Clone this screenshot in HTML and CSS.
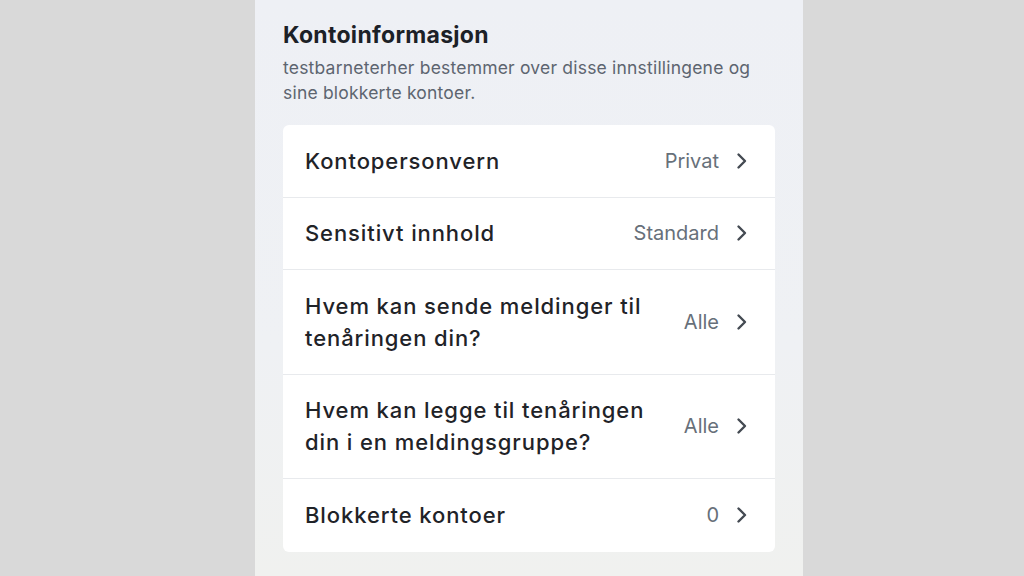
FILE: index.html
```html
<!DOCTYPE html>
<html lang="no">
<head>
<meta charset="utf-8">
<link rel="stylesheet" href="styles.css">
</head>
<body>
<div class="panel">
  <h1 class="title">Kontoinformasjon</h1>
  <p class="subtitle">testbarneterher bestemmer over disse innstillingene og sine blokkerte kontoer.</p>
  <div class="card">
    <div class="row r1">
      <span class="label">Kontopersonvern</span>
      <span class="value">Privat</span>
      <svg class="chev" viewBox="0 0 12 18"><path d="M2.5 2.5 L9 9 L2.5 15.5"/></svg>
    </div>
    <div class="row r1">
      <span class="label">Sensitivt innhold</span>
      <span class="value">Standard</span>
      <svg class="chev" viewBox="0 0 12 18"><path d="M2.5 2.5 L9 9 L2.5 15.5"/></svg>
    </div>
    <div class="row r2">
      <span class="label">Hvem kan sende meldinger til tenåringen din?</span>
      <span class="value">Alle</span>
      <svg class="chev" viewBox="0 0 12 18"><path d="M2.5 2.5 L9 9 L2.5 15.5"/></svg>
    </div>
    <div class="row r2">
      <span class="label">Hvem kan legge til tenåringen din i en meldingsgruppe?</span>
      <span class="value">Alle</span>
      <svg class="chev" viewBox="0 0 12 18"><path d="M2.5 2.5 L9 9 L2.5 15.5"/></svg>
    </div>
    <div class="row r1 last">
      <span class="label">Blokkerte kontoer</span>
      <span class="value">0</span>
      <svg class="chev" viewBox="0 0 12 18"><path d="M2.5 2.5 L9 9 L2.5 15.5"/></svg>
    </div>
  </div>
</div>
</body>
</html>
```
FILE: styles.css
```css
html, body {
  margin: 0;
  padding: 0;
  height: 100%;
}
body {
  background: #d9d9d9;
  font-family: Inter, "Liberation Sans", sans-serif;
  overflow: hidden;
}
.panel {
  width: 548px;
  margin-left: 255px;
  height: 576px;
  box-sizing: border-box;
  padding: 20px 28px 0 28px;
  background: linear-gradient(180deg, #eef0f5 0%, #eff1f4 60%, #f0f1ef 100%);
}
.title {
  margin: 0;
  font-size: 23px;
  font-weight: 700;
  line-height: 30px;
  color: #1c2127;
  letter-spacing: 0.3px;
}
.subtitle {
  margin: 5px 0 0 0;
  width: 480px;
  font-size: 17.5px;
  line-height: 25px;
  color: #5d6570;
  letter-spacing: 0.2px;
}
.card {
  margin-top: 20px;
  width: 492px;
  background: #ffffff;
  border-radius: 6px;
  display: flex;
  flex-direction: column;
}
.row {
  display: flex;
  align-items: center;
  padding: 0 27px 0 22px;
  border-bottom: 1px solid #e8eaed;
  box-sizing: border-box;
}
.row.last { border-bottom: none; }
.r1 { height: 72.5px; }
.r2 { height: 104.5px; }
.label {
  flex: 0 1 auto;
  font-size: 22px;
  line-height: 32px;
  font-weight: 500;
  color: #1f2328;
  letter-spacing: 0.9px;
}
.r2 .label { flex-basis: 345px; }
.value {
  margin-left: auto;
  font-size: 20px;
  color: #67707a;
  margin-right: 17px;
}
.chev {
  width: 12px;
  height: 18px;
  fill: none;
  stroke: #444a52;
  stroke-width: 2.4;
  stroke-linecap: round;
  stroke-linejoin: round;
}
```
